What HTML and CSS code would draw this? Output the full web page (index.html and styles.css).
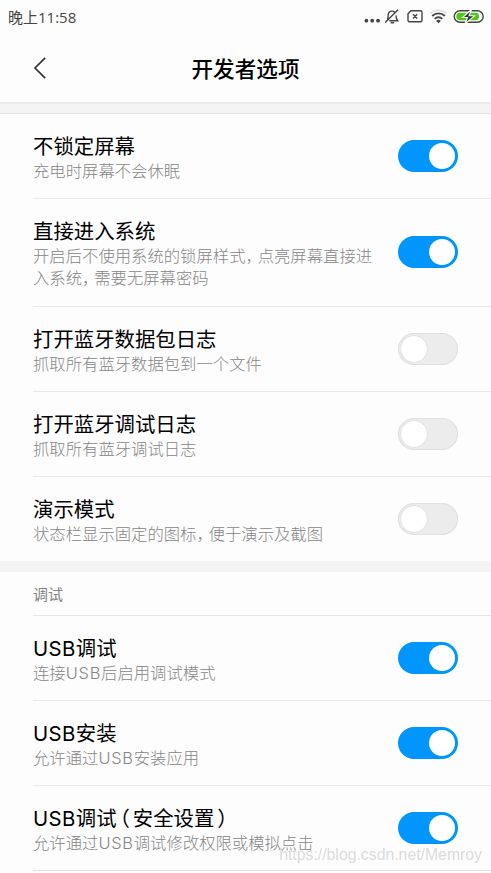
FILE: index.html
```html
<!DOCTYPE html>
<html lang="zh-CN">
<head>
  <meta charset="UTF-8" />
  <meta name="viewport" content="width=device-width, initial-scale=1" />
  <title>开发者选项</title>
  <link rel="stylesheet" href="styles.css">
</head>
<body>
  <div class="status-bar">
    <span class="time">晚上11:58</span>
    <svg class="status-icons" width="122" height="20" viewBox="0 0 122 20" fill="none" stroke="#444" stroke-width="1.4">
      <!-- more -->
      <g fill="#444" stroke="none">
        <circle cx="2.4" cy="12.7" r="1.9" />
        <circle cx="8.2" cy="12.7" r="1.9" />
        <circle cx="14" cy="12.7" r="1.9" />
      </g>
      <!-- muted bell -->
      <path d="M23.300 11.500c.8-1 .9-2 .9-4 0-2.600 1.300-4.400 3.800-4.400 1.200 0 2.100.4 2.700 1.100M32 7.500c0 2.600.3 3.600 1.700 5.200H25.300M26.700 14.700h3.400M34 1.800L21.200 14.600" />
      <!-- no sim -->
      <path d="M47 2.800h9.500a1.500 1.500 0 0 1 1.500 1.500v7.900a1.500 1.500 0 0 1-1.500 1.500H45.500a1.500 1.500 0 0 1-1.500-1.500V5.800zM49 6.200l4.200 4.200M53.200 6.200L49 10.400" />
      <!-- wifi -->
      <path d="M66.400 5.600a11.500 11.500 0 0 1 16.200 0" stroke="#ddd" stroke-width="1.600" />
      <path d="M68.200 8a8.800 8.800 0 0 1 12.600 0M70.700 10.800a5.400 5.400 0 0 1 7.600 0" stroke-width="1.800" />
      <path d="M74.500 15.300l-2.300-2.400a3.200 3.200 0 0 1 4.600 0z" fill="#444" stroke="none" />
      <!-- charging battery -->
      <rect x="90.200" y="2.700" width="29" height="11.600" rx="5.800" />
      <rect x="92.300" y="4.800" width="22.800" height="7.400" rx="3.700" fill="#4fc71c" stroke="none" />
      <path d="M107.500 1.500l-9 8h5l-2.600 6.500 9.600-8.200h-5.400z" fill="#333" stroke="#fff" stroke-width="1.100" />
    </svg>
  </div>

  <header class="title-bar">
    <svg class="back" width="14" height="24" viewBox="0 0 14 24" fill="none" stroke="#333" stroke-width="1.700">
      <path d="M12.200 1.800L2 12l10.200 10.200" />
    </svg>
    <h1>开发者选项</h1>
  </header>
  <div class="divider"></div>

  <section class="group first">
    <div class="row">
      <div class="text">
        <div class="name">不锁定屏幕</div>
        <div class="desc">充电时屏幕不会休眠</div>
      </div>
      <div class="switch on"></div>
    </div>
    <div class="row tall">
      <div class="text">
        <div class="name">直接进入系统</div>
        <div class="desc">开启后不使用系统的锁屏样式<span class="comma">，</span>点亮屏幕直接进<br>入系统<span class="comma">，</span>需要无屏幕密码</div>
      </div>
      <div class="switch on"></div>
    </div>
    <div class="row">
      <div class="text">
        <div class="name">打开蓝牙数据包日志</div>
        <div class="desc">抓取所有蓝牙数据包到一个文件</div>
      </div>
      <div class="switch"></div>
    </div>
    <div class="row">
      <div class="text">
        <div class="name">打开蓝牙调试日志</div>
        <div class="desc">抓取所有蓝牙调试日志</div>
      </div>
      <div class="switch"></div>
    </div>
    <div class="row">
      <div class="text">
        <div class="name">演示模式</div>
        <div class="desc">状态栏显示固定的图标<span class="comma">，</span>便于演示及截图</div>
      </div>
      <div class="switch"></div>
    </div>
  </section>

  <section class="group">
    <h2>调试</h2>
    <div class="row">
      <div class="text">
        <div class="name"><span class="latin">USB</span>调试</div>
        <div class="desc">连接<span class="latin">USB</span>后启用调试模式</div>
      </div>
      <div class="switch on"></div>
    </div>
    <div class="row">
      <div class="text">
        <div class="name"><span class="latin">USB</span>安装</div>
        <div class="desc">允许通过<span class="latin">USB</span>安装应用</div>
      </div>
      <div class="switch on"></div>
    </div>
    <div class="row bordered">
      <div class="text">
        <div class="name"><span class="latin">USB</span>调试<span class="paren">（</span>安全设置<span class="paren">）</span></div>
        <div class="desc">允许通过<span class="latin">USB</span>调试修改权限或模拟点击</div>
      </div>
      <div class="switch on"></div>
    </div>
  </section>

  <div class="watermark">https://blog.csdn.net/Memroy</div>
</body>
</html>
```
FILE: styles.css
```css
* {
  box-sizing: border-box;
}
body {
  margin: 0;
  height: 873px;
  overflow: hidden;
  position: relative;
  background: #fdfdfd;
  color: #000;
  font-family: 'Noto Sans CJK SC', sans-serif;
}
.status-bar {
  display: flex;
  justify-content: space-between;
  align-items: center;
  height: 34px;
  padding: 0 5px 0 8px;
}
.status-icons {
  margin-top: 2px;
}
.time {
  font-family: 'Open Sans', 'Noto Sans CJK SC', sans-serif;
  font-size: 15px;
  line-height: 20px;
  color: #444;
}
.title-bar {
  display: grid;
  grid-template-columns: 14px 1fr 14px;
  align-items: center;
  height: 68px;
  padding: 0 33px;
}
h1 {
  margin: 0;
  font-size: 21.6px;
  font-weight: 500;
  line-height: 30px;
  text-align: center;
}
.divider {
  height: 12px;
  background: #f4f4f4;
  border-top: 2px solid #e9e9e9;
  border-bottom: 1px solid #e2e2e2;
}
.group {
  border-top: 11px solid #f4f4f4;
}
.group.first {
  border-top: none;
}
h2 {
  margin: 0 0 0 33px;
  height: 44px;
  border-bottom: 1px solid #e6e6e6;
  font-size: 15px;
  font-weight: 400;
  line-height: 43px;
  color: #828282;
}
.row {
  display: flex;
  justify-content: space-between;
  align-items: center;
  margin-left: 33px;
  padding: 17px 33px 17px 0;
  border-bottom: 1px solid #e9e9e9;
}
.row.tall {
  padding-bottom: 18px;
}
.row:last-child {
  border-bottom: none;
}
.row.bordered {
  border-bottom: 1px solid #e2e2e2;
}
.name {
  font-size: 20.4px;
  line-height: 28px;
  white-space: nowrap;
}
.desc {
  font-size: 16.35px;
  font-weight: 300;
  line-height: 22px;
  color: #868686;
  white-space: nowrap;
}
.latin {
  font-family: Inter, sans-serif;
  letter-spacing: 0.4px;
  line-height: 1;
}
.desc .latin {
  letter-spacing: 0.8px;
}
.comma,
.paren {
  font-feature-settings: 'halt';
}
.comma {
  margin-right: 4px;
}
.paren {
  margin: 0 3px;
}
.switch {
  flex: none;
  width: 60px;
  height: 32px;
  padding: 3px;
  border-radius: 16px;
  background: #ececec;
  box-shadow: inset 0 0 0 1px #e0e0e0;
}
.switch::before {
  content: '';
  display: block;
  width: 26px;
  height: 26px;
  border-radius: 50%;
  background: #fff;
  box-shadow: 0 0 1px #bbb;
}
.switch.on {
  background: #0096fd;
  box-shadow: none;
}
.switch.on::before {
  margin-left: auto;
  box-shadow: none;
}
.watermark {
  position: absolute;
  right: 9px;
  bottom: 8px;
  font-family: 'Liberation Sans', sans-serif;
  font-size: 15.8px;
  line-height: 20px;
  color: rgba(165, 165, 165, 0.4);
}
```
